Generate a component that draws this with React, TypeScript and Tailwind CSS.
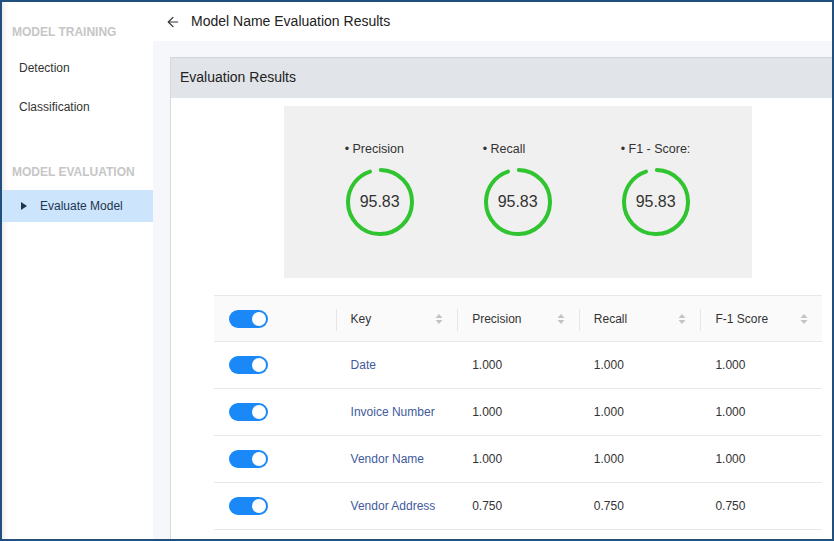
import { ArrowLeft } from 'lucide-react';

const metrics = [
  { label: 'Precision', value: 95.83 },
  { label: 'Recall', value: 95.83 },
  { label: 'F1 - Score:', value: 95.83 },
];

const rows = [
  { key: 'Date', precision: '1.000', recall: '1.000', f1: '1.000' },
  { key: 'Invoice Number', precision: '1.000', recall: '1.000', f1: '1.000' },
  { key: 'Vendor Name', precision: '1.000', recall: '1.000', f1: '1.000' },
  { key: 'Vendor Address', precision: '0.750', recall: '0.750', f1: '0.750' },
];

function Ring({ value }: { value: number }) {
  const r = 32;
  const c = 2 * Math.PI * r;
  return (
    <div className="relative w-[68px] h-[68px]">
      <svg width="68" height="68" viewBox="0 0 68 68" className="-rotate-90">
        <circle
          cx="34"
          cy="34"
          r={r}
          fill="none"
          stroke="#30c530"
          strokeWidth="4"
          strokeLinecap="round"
          strokeDasharray={`${(c * value) / 100 - 3} ${c}`}
          transform="rotate(1.5 34 34)"
        />
      </svg>
      <div className="absolute inset-0 flex items-center justify-center text-[16px] text-[#333]">
        {value.toFixed(2)}
      </div>
    </div>
  );
}

function Toggle() {
  return (
    <div className="w-[39px] h-[18px] rounded-full bg-[#1a89f7] relative">
      <div className="absolute right-[2px] top-[2px] w-[14px] h-[14px] rounded-full bg-white" />
    </div>
  );
}

function SortIcon() {
  return (
    <svg width="8" height="12" viewBox="0 0 8 12" className="shrink-0">
      <path d="M4 1 L7.5 5 H0.5 Z" fill="#c4c4c4" />
      <path d="M4 11 L7.5 7 H0.5 Z" fill="#c4c4c4" />
    </svg>
  );
}

function HeaderCell({ label, divider }: { label: string; divider?: boolean }) {
  return (
    <div className="relative flex items-center justify-between pl-[15px] pr-[14px]">
      {divider && <div className="absolute left-0 top-[13px] h-[22px] w-px bg-[#e6e6e6]" />}
      <span>{label}</span>
      <SortIcon />
    </div>
  );
}

export default function App() {
  return (
    <div
      className="w-[834px] h-[541px] border-2 border-[#22507e] overflow-hidden flex bg-white text-[#333]"
      style={{ fontFamily: '"Liberation Sans", Arial, sans-serif' }}
    >
      {/* sidebar */}
      <aside className="w-[151px] shrink-0 flex flex-col bg-white shadow-[inset_7px_0_6px_-5px_rgba(0,0,0,0.09)]">
        <div className="mt-[20px] h-[20px] flex items-center pl-[10px] text-[12px] font-bold text-[#c6c6c6]">
          MODEL TRAINING
        </div>
        <div className="mt-[6px] h-[39px] flex items-center pl-[17px] text-[12px]">Detection</div>
        <div className="h-[39px] flex items-center pl-[17px] text-[12px]">Classification</div>
        <div className="mt-[36px] h-[20px] flex items-center pl-[10px] text-[12px] font-bold text-[#c6c6c6]">
          MODEL EVALUATION
        </div>
        <div className="mt-[8px] h-[32px] flex items-center bg-[#cce4fc] pl-[18px] text-[12px] text-[#1e3550]">
          <svg width="8" height="10" viewBox="0 0 8 10" className="mr-[12px]">
            <path d="M1 1 L7 5 L1 9 Z" fill="#1e3550" />
          </svg>
          Evaluate Model
        </div>
      </aside>

      {/* main */}
      <main className="flex-1 min-w-0 flex flex-col">
        <header className="h-[39px] shrink-0 flex items-center pl-[12px] bg-white">
          <ArrowLeft size={16} strokeWidth={1.8} className="text-[#333]" />
          <span className="ml-[10px] text-[14px] text-[#222]">Model Name Evaluation Results</span>
        </header>

        <div className="flex-1 bg-[#f6f7fb] pl-[17px] pt-[16px]">
          <section className="w-[696px] h-full bg-white border-l border-[#d8d9dc]">
            <div className="h-[41px] flex items-center pl-[9px] pb-px bg-[#e1e4e9] border-t border-[#d2d5da] text-[14px] text-[#222]">
              Evaluation Results
            </div>

            <div className="ml-[113px] mt-[8px] w-[468px] h-[172px] bg-[#f0f0f0] flex justify-center gap-[70px] pt-[36px]">
              {metrics.map(m => (
                <div key={m.label} className="flex flex-col items-start">
                  <div className="text-[12.5px] leading-[14px] text-[#333] -ml-px">• {m.label}</div>
                  <div className="mt-[12px]">
                    <Ring value={m.value} />
                  </div>
                </div>
              ))}
            </div>

            <div className="ml-[43px] mt-[17px] w-[608px] text-[12px]">
              <div className="grid grid-cols-5 h-[47px] bg-[#fafafa] border-t border-b border-[#e8e8e8]">
                <div className="flex items-center pl-[15px]">
                  <Toggle />
                </div>
                <HeaderCell label="Key" divider />
                <HeaderCell label="Precision" divider />
                <HeaderCell label="Recall" divider />
                <HeaderCell label="F-1 Score" divider />
              </div>
              {rows.map(row => (
                <div key={row.key} className="grid grid-cols-5 h-[47px] border-b border-[#e8e8e8]">
                  <div className="flex items-center pl-[15px]">
                    <Toggle />
                  </div>
                  <div className="flex items-center pl-[15px] text-[#3f5a9c]">{row.key}</div>
                  <div className="flex items-center pl-[15px]">{row.precision}</div>
                  <div className="flex items-center pl-[15px]">{row.recall}</div>
                  <div className="flex items-center pl-[15px]">{row.f1}</div>
                </div>
              ))}
            </div>
          </section>
        </div>
      </main>
    </div>
  );
}
